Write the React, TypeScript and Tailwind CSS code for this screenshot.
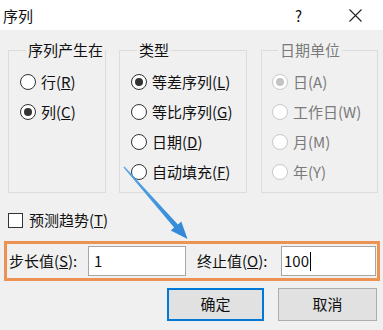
import React from "react";

type RadioProps = {
  checked?: boolean;
  disabled?: boolean;
  children: React.ReactNode;
};

function Radio({ checked, disabled, children }: RadioProps) {
  return (
    <div className="flex h-[30px] items-center">
      <span
        className={`flex h-[16px] w-[16px] shrink-0 items-center justify-center rounded-full border bg-white ${
          disabled ? "border-[#c8c8c8]" : "border-[#333333]"
        }`}
      >
        {checked && (
          <span
            className={`h-[8px] w-[8px] rounded-full ${
              disabled ? "bg-[#c4c4c4]" : "bg-[#333333]"
            }`}
          />
        )}
      </span>
      <span className={`ml-[5px] whitespace-nowrap ${disabled ? "text-[#7a7a7a]" : "text-[#111111]"}`}>
        {children}
      </span>
    </div>
  );
}

function Group({
  title,
  disabled,
  className,
  children,
}: {
  title: string;
  disabled?: boolean;
  className: string;
  children: React.ReactNode;
}) {
  return (
    <fieldset className={`h-[153px] border border-[#dcdcdc] ${className}`}>
      <legend
        className={`ml-[6px] px-[2px] leading-[20px] ${disabled ? "text-[#7a7a7a]" : "text-[#111111]"}`}
      >
        {title}
      </legend>
      <div className="pt-[7px]">{children}</div>
    </fieldset>
  );
}

export default function App() {
  return (
    <div
      className="relative h-[330px] w-[383px] overflow-hidden bg-[#f0f0f0] text-[15px] text-[#111111]"
      style={{ fontFamily: '"Noto Sans CJK SC", "Noto Sans", sans-serif' }}
    >
      {/* title bar */}
      <div className="flex h-[30px] items-center bg-white pl-[3px]">
        <span className="leading-none">序列</span>
        <div className="ml-auto flex items-center">
          <span className="w-[8px] leading-none">?</span>
          <svg className="ml-[46px] mr-[21px]" width="13" height="13" viewBox="0 0 13 13">
            <path d="M0.5 0.5 L12.5 12.5 M12.5 0.5 L0.5 12.5" stroke="#222" strokeWidth="1.1" />
          </svg>
        </div>
      </div>

      {/* groups */}
      <div className="mt-[10px] flex pl-[8px]">
        <Group title="序列产生在" className="w-[98px] pl-[11px]">
          <Radio>
            行(<u>R</u>)
          </Radio>
          <Radio checked>
            列(<u>C</u>)
          </Radio>
        </Group>
        <Group title="类型" className="ml-[13px] w-[128px] pl-[11px]">
          <Radio checked>
            等差序列(<u>L</u>)
          </Radio>
          <Radio>
            等比序列(<u>G</u>)
          </Radio>
          <Radio>
            日期(<u>D</u>)
          </Radio>
          <Radio>
            自动填充(<u>F</u>)
          </Radio>
        </Group>
        <Group title="日期单位" disabled className="ml-[14px] w-[117px] pl-[10px]">
          <Radio checked disabled>
            日(A)
          </Radio>
          <Radio disabled>工作日(W)</Radio>
          <Radio disabled>月(M)</Radio>
          <Radio disabled>年(Y)</Radio>
        </Group>
      </div>

      {/* checkbox */}
      <div className="mt-[17px] flex h-[20px] items-center pl-[8px]">
        <span className="h-[15px] w-[15px] border border-[#333333] bg-white" />
        <span className="ml-[6px]">
          预测趋势(<u>T</u>)
        </span>
      </div>

      {/* step / stop values */}
      <div className="ml-[4px] mt-[11px] flex h-[40px] w-[376px] items-center border-[3px] border-[#ec9353] pl-[2px]">
        <span className="w-[79px] whitespace-nowrap">
          步长值(<u>S</u>):
        </span>
        <div className="flex h-[30px] w-[98px] items-center border border-[#a6a6a6] bg-white pl-[5px]">
          1
        </div>
        <span className="w-[95px] whitespace-nowrap pl-[11px]">
          终止值(<u>O</u>):
        </span>
        <div className="flex h-[30px] w-[95px] items-center border border-[#a6a6a6] bg-white pl-[2px]">
          100
          <span className="ml-[1px] h-[19px] w-[1px] bg-black" />
        </div>
      </div>

      {/* buttons */}
      <div className="ml-[167px] mt-[7px] flex gap-[14px]">
        <button className="flex h-[33px] w-[97px] items-center justify-center border-2 border-[#0078d7] bg-[#e1e1e1]">
          确定
        </button>
        <button className="flex h-[33px] w-[99px] items-center justify-center border border-[#adadad] bg-[#e1e1e1]">
          取消
        </button>
      </div>

      {/* annotation arrow */}
      <svg className="pointer-events-none absolute left-0 top-0" width="383" height="330" viewBox="0 0 383 330">
        <defs>
          <linearGradient id="arrowFill" x1="0" y1="0" x2="1" y2="1">
            <stop offset="0" stopColor="#5aa6e6" />
            <stop offset="1" stopColor="#2f86d6" />
          </linearGradient>
        </defs>
        <polygon
          points="124.5,166.5 177.9,224.4 181.3,221.4 187.5,239 170.7,230.6 174.1,227.6 123.5,167.5"
          fill="url(#arrowFill)"
        />
      </svg>
    </div>
  );
}
